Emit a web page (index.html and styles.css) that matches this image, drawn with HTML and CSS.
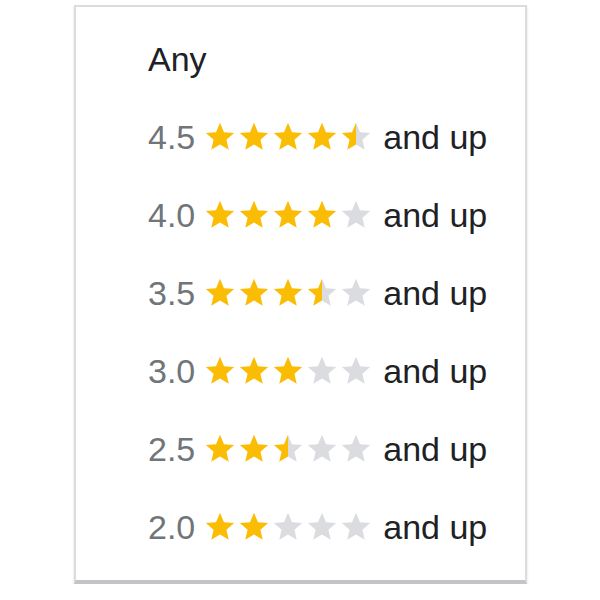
FILE: index.html
```html
<!DOCTYPE html>
<html lang="en">
<head>
<meta charset="utf-8">
<title>Guest rating</title>
<link rel="stylesheet" href="styles.css">
</head>
<body>
<svg class="defs" width="0" height="0" aria-hidden="true">
  <defs>
    <symbol id="star" viewBox="0 0 24 24">
      <path d="M12 17.27L18.18 21l-1.64-7.03L22 9.24l-7.19-.61L12 2 9.19 8.63 2 9.24l5.46 4.73L5.82 21z"/>
    </symbol>
    <linearGradient id="half" x1="0" x2="1" y1="0" y2="0">
      <stop offset="50%" stop-color="#fbbc04"/>
      <stop offset="50%" stop-color="#dadce0"/>
    </linearGradient>
  </defs>
</svg>

<div class="card">
  <ul class="options">
    <li class="option"><span class="label">Any</span></li>

    <li class="option">
      <span class="value">4.5</span>
      <span class="stars">
        <svg class="star on"><use href="#star"/></svg>
        <svg class="star on"><use href="#star"/></svg>
        <svg class="star on"><use href="#star"/></svg>
        <svg class="star on"><use href="#star"/></svg>
        <svg class="star half"><use href="#star"/></svg>
      </span>
      <span class="label">and up</span>
    </li>

    <li class="option">
      <span class="value">4.0</span>
      <span class="stars">
        <svg class="star on"><use href="#star"/></svg>
        <svg class="star on"><use href="#star"/></svg>
        <svg class="star on"><use href="#star"/></svg>
        <svg class="star on"><use href="#star"/></svg>
        <svg class="star"><use href="#star"/></svg>
      </span>
      <span class="label">and up</span>
    </li>

    <li class="option">
      <span class="value">3.5</span>
      <span class="stars">
        <svg class="star on"><use href="#star"/></svg>
        <svg class="star on"><use href="#star"/></svg>
        <svg class="star on"><use href="#star"/></svg>
        <svg class="star half"><use href="#star"/></svg>
        <svg class="star"><use href="#star"/></svg>
      </span>
      <span class="label">and up</span>
    </li>

    <li class="option">
      <span class="value">3.0</span>
      <span class="stars">
        <svg class="star on"><use href="#star"/></svg>
        <svg class="star on"><use href="#star"/></svg>
        <svg class="star on"><use href="#star"/></svg>
        <svg class="star"><use href="#star"/></svg>
        <svg class="star"><use href="#star"/></svg>
      </span>
      <span class="label">and up</span>
    </li>

    <li class="option">
      <span class="value">2.5</span>
      <span class="stars">
        <svg class="star on"><use href="#star"/></svg>
        <svg class="star on"><use href="#star"/></svg>
        <svg class="star half"><use href="#star"/></svg>
        <svg class="star"><use href="#star"/></svg>
        <svg class="star"><use href="#star"/></svg>
      </span>
      <span class="label">and up</span>
    </li>

    <li class="option">
      <span class="value">2.0</span>
      <span class="stars">
        <svg class="star on"><use href="#star"/></svg>
        <svg class="star on"><use href="#star"/></svg>
        <svg class="star"><use href="#star"/></svg>
        <svg class="star"><use href="#star"/></svg>
        <svg class="star"><use href="#star"/></svg>
      </span>
      <span class="label">and up</span>
    </li>
  </ul>
</div>
</body>
</html>
```

FILE: styles.css
```css
html, body {
  margin: 0;
  padding: 0;
  background: #ffffff;
}

body {
  font-family: "Liberation Sans", Arial, sans-serif;
  font-size: 34px;
  color: #202124;
}

.defs {
  position: absolute;
  width: 0;
  height: 0;
  overflow: hidden;
}

/* filter panel; the heavier bottom edge reads as a drop shadow */
.card {
  box-sizing: border-box;
  width: 453px;
  height: 579px;
  margin: 5px 0 0 74px;
  border: 2px solid #dadce0;
  border-bottom: 4px solid #c2c4c8;
  background: #ffffff;
  box-shadow: 0 2px 2px rgba(60, 64, 67, 0.2);
}

.options {
  list-style: none;
  margin: 0;
  padding: 13px 0 0 72px;
}

.option {
  display: flex;
  align-items: center;
  height: 78px;
}

.value {
  color: #70757a;
  margin-right: 8px;
}

.stars {
  display: flex;
  margin-right: 10px;
}

.star {
  width: 34px;
  height: 34px;
  fill: #dadce0;
}

.star.on {
  fill: #fbbc04;
}

.star.half {
  fill: url(#half);
}

.label {
  color: #202124;
}
```
